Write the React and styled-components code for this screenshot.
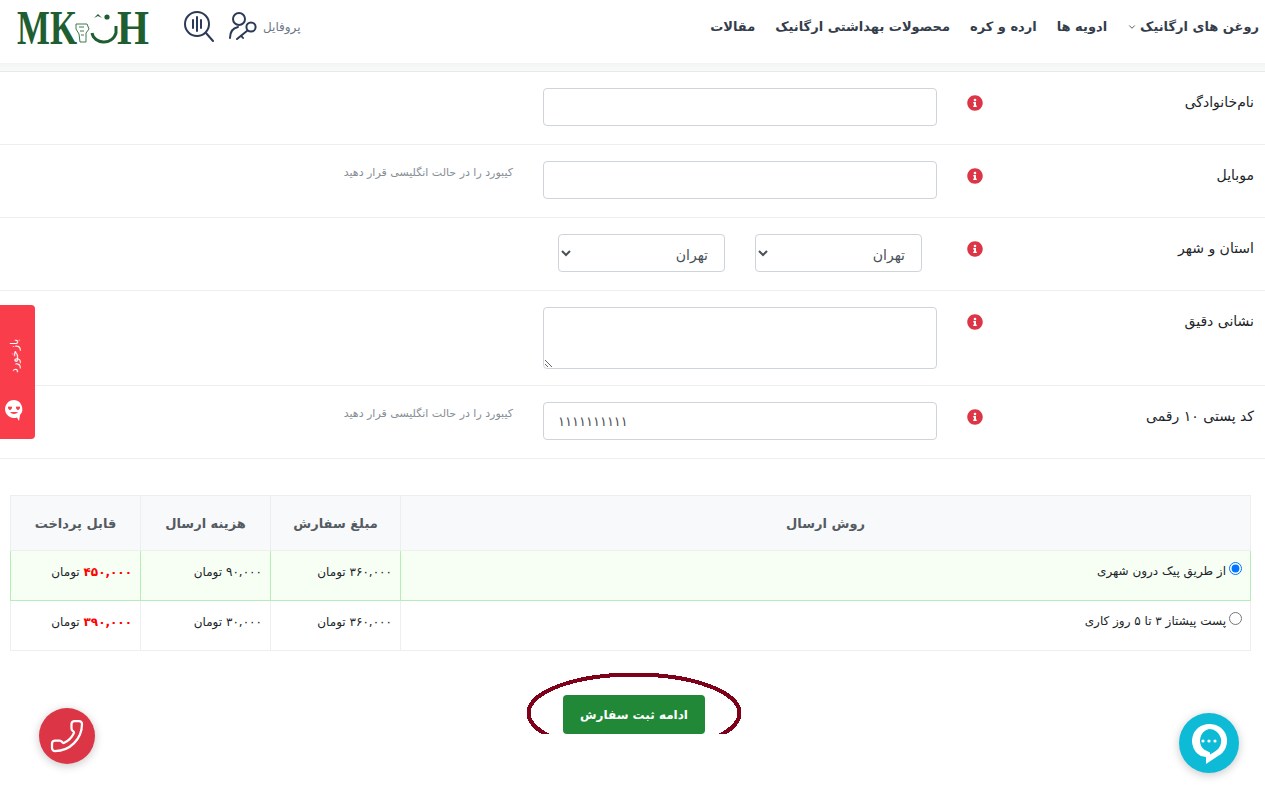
import React from 'react'
import styled, { createGlobalStyle } from 'styled-components'
import { ChevronDown, Phone } from 'lucide-react'
import { FaInfoCircle } from 'react-icons/fa'

const Global = createGlobalStyle`
  html, body {
    margin: 0;
    padding: 0;
    background: #fff;
    overflow: hidden;
  }
  body {
    direction: rtl;
    font-family: "DejaVu Sans", "Noto Sans", sans-serif;
    color: #212529;
  }
  * { box-sizing: border-box; }
`

const Header = styled.header`
  height: 63px;
  padding: 0 6px 10px 17px;
  background: #fff;
  display: flex;
  align-items: center;
  justify-content: space-between;
`

const HeaderEdge = styled.div`
  height: 9px;
  background: linear-gradient(#f3f4f4, #f8f9f9);
  border-bottom: 1px solid #e6e8ea;
`

const Nav = styled.nav`
  display: flex;
  align-items: center;
  gap: 20px;
`

const NavItem = styled.a`
  display: flex;
  align-items: center;
  gap: 3px;
  font-size: 13px;
  font-weight: 700;
  color: #343d4b;
  white-space: nowrap;
`

const Tools = styled.div`
  display: flex;
  align-items: center;
`

const ProfileLink = styled.a`
  display: flex;
  align-items: center;
  gap: 4px;
  font-size: 12px;
  color: #6c7688;
`

const SearchIcon = styled.svg`
  width: 30px;
  height: 36px;
  margin: 0 15px 0 34px;
`

const Row = styled.section`
  min-height: 73px;
  padding: 16px 0;
  display: grid;
  grid-template-columns: 275px 53px 394px 1fr;
  border-bottom: 1px solid #eceeef;
`

const Label = styled.label`
  padding: 6px 11px 0 0;
  font-size: 14px;
  color: #212529;
`

const InfoCell = styled.div`
  padding: 7px 7px 0 0;
  color: #dc3545;
  font-size: 16px;
  line-height: 16px;
`

const Field = styled.input`
  width: 394px;
  height: 38px;
  padding: 0 14px;
  border: 1px solid #ced4da;
  border-radius: 4px;
  background: #fff;
  font: 13px "DejaVu Sans", sans-serif;
  color: #495057;
  direction: ${p => (p.$ltr ? 'ltr' : 'rtl')};
`

const TextArea = styled.textarea`
  display: block;
  width: 394px;
  height: 62px;
  border: 1px solid #ced4da;
  border-radius: 4px;
`

const SelectGroup = styled.div`
  display: flex;
  gap: 30px;
  padding-right: 15px;
`

const Select = styled.select`
  width: 167px;
  height: 38px;
  padding: 4px 12px 0 0;
  border: 1px solid #ced4da;
  border-radius: 4px;
  background: #fff;
  font: 14px "DejaVu Sans", sans-serif;
  color: #495057;
`

const Hint = styled.p`
  margin: 5px 30px 0 0;
  font-size: 11px;
  color: #868e96;
`

const Table = styled.table`
  width: 1240px;
  margin: 36px 14px 0 11px;
  border-collapse: collapse;
  table-layout: fixed;
`

const HeadCell = styled.th`
  height: 55px;
  padding: 0;
  background: #f8f9fa;
  border: 1px solid #eeeeee;
  font-size: 13px;
  font-weight: 700;
  color: #555b62;
  text-align: center;
`

const Cell = styled.td`
  height: 50px;
  padding: 14px 8px 0;
  vertical-align: top;
  text-align: right;
  font-size: 12px;
  color: #212529;
  background: ${p => (p.$active ? '#f7fff5' : '#fff')};
  border: 1px solid ${p => (p.$active ? '#b5eeb5' : '#eeeeee')};
`

const MethodCell = styled(Cell)`
  padding-top: 13px;
  padding-right: 8px;
`

const Method = styled.label`
  display: flex;
  align-items: center;
  gap: 3px;
  font-size: 12px;
`

const Radio = styled.input`
  width: 13px;
  height: 13px;
  margin: 0;
  position: relative;
  top: -3px;
`

const Price = styled.b`
  color: #ff0000;
`

const Submit = styled.div`
  display: flex;
  justify-content: center;
  margin-top: 44px;
  padding-left: 3px;
`

const SubmitWrap = styled.div`
  position: relative;
`

const SubmitButton = styled.button`
  display: block;
  width: 142px;
  height: 39px;
  border: 0;
  border-radius: 4px;
  background: #218838;
  color: #fff;
  font: 700 12px "DejaVu Sans", sans-serif;
`

const Ring = styled.svg`
  position: absolute;
  left: -37px;
  top: -23px;
  width: 216px;
  height: 82px;
  pointer-events: none;
`

const FeedbackTab = styled.a`
  position: fixed;
  left: 0;
  top: 305px;
  width: 35px;
  height: 134px;
  padding: 30px 0 0;
  border-radius: 0 4px 4px 0;
  background: #f93d4b;
  color: #fff;
  display: flex;
  flex-direction: column;
  align-items: center;
  font-size: 11px;
`

const FeedbackText = styled.span`
  writing-mode: vertical-rl;
  transform: rotate(180deg);
  height: 42px;
  margin: 0 6px 0 0;
  text-align: center;
`

const FeedbackIcon = styled.svg`
  width: 22px;
  height: 24px;
  margin: 21px 7px 0 0;
`

const RoundButton = styled.a`
  position: fixed;
  left: ${p => p.$left}px;
  top: ${p => p.$top}px;
  width: ${p => p.$size}px;
  height: ${p => p.$size}px;
  border-radius: 50%;
  background: ${p => p.$color};
  box-shadow: 0 2px 10px rgba(0, 0, 0, 0.22);
  display: flex;
  align-items: center;
  justify-content: center;
  color: #fff;
`

const PhoneIcon = styled(Phone)`
  transform: scaleX(-1);
`

const LogoMark = () => (
  <svg width="133" height="42" viewBox="0 0 133 42">
    <g fill="#1f5e30" fontFamily="Liberation Serif, serif" fontWeight="700" fontSize="48" direction="ltr">
      <text x="0" y="38" textLength="60" lengthAdjust="spacingAndGlyphs">MK</text>
      <text x="100" y="38" textLength="32" lengthAdjust="spacingAndGlyphs">H</text>
    </g>
    <g fill="none" stroke="#3c7a4c" strokeWidth="1">
      <path d="M59 18h11l2 5-3 4v9h-6l-1-8-3-5z" />
      <path d="M62 21h5M63 25h4M64 29h3" />
    </g>
    <path d="M75 27c2 11 20 13 24 0V20" fill="none" stroke="#1f5e30" strokeWidth="3" />
    <circle cx="90" cy="11" r="2.6" fill="#1f5e30" />
    <path d="M77 12l4-4 4 4-4-2z" fill="#1f5e30" />
  </svg>
)

const UserKey = () => (
  <svg width="30" height="32" viewBox="0 0 30 32" fill="none" stroke="#2c3a56" strokeWidth="2" strokeLinecap="round">
    <circle cx="10" cy="8" r="6" />
    <path d="M1 27c0-6 3-10 8-11" />
    <circle cx="22" cy="16" r="4.6" />
    <path d="M18.5 19.5L8 28v0M12 24.500l2 2.500" />
  </svg>
)

const rows = [
  { method: 'از طریق پیک درون شهری', order: '۳۶۰,۰۰۰', shipping: '۹۰,۰۰۰', total: '۴۵۰,۰۰۰', active: true },
  { method: 'پست پیشتاز ۳ تا ۵ روز کاری', order: '۳۶۰,۰۰۰', shipping: '۳۰,۰۰۰', total: '۳۹۰,۰۰۰', active: false },
]

const hint = 'کیبورد را در حالت انگلیسی قرار دهید'

const Info = () => (
  <InfoCell>
    <FaInfoCircle />
  </InfoCell>
)

export default function App() {
  return (
    <>
      <Global />
      <Header>
        <Nav>
          <NavItem>روغن های ارگانیک <ChevronDown size={10} /></NavItem>
          <NavItem>ادویه ها</NavItem>
          <NavItem>ارده و کره</NavItem>
          <NavItem>محصولات بهداشتی ارگانیک</NavItem>
          <NavItem>مقالات</NavItem>
        </Nav>
        <Tools>
          <ProfileLink>پروفایل <UserKey /></ProfileLink>
          <SearchIcon viewBox="0 0 30 36" fill="none" stroke="#2c3a56" strokeWidth="2" strokeLinecap="round">
            <circle cx="13" cy="15" r="12" />
            <path d="M22 24l7 8M9 11v8M13 8v14M17 11v8" />
          </SearchIcon>
          <LogoMark />
        </Tools>
      </Header>
      <HeaderEdge />

      <Row>
        <Label>نام‌خانوادگی</Label>
        <Info />
        <Field />
      </Row>
      <Row>
        <Label>موبایل</Label>
        <Info />
        <Field />
        <Hint>{hint}</Hint>
      </Row>
      <Row>
        <Label>استان و شهر</Label>
        <Info />
        <SelectGroup>
          <Select><option>تهران</option></Select>
          <Select><option>تهران</option></Select>
        </SelectGroup>
      </Row>
      <Row>
        <Label>نشانی دقیق</Label>
        <Info />
        <TextArea />
      </Row>
      <Row>
        <Label>کد پستی ۱۰ رقمی</Label>
        <Info />
        <Field $ltr defaultValue="۱۱۱۱۱۱۱۱۱۱" />
        <Hint>{hint}</Hint>
      </Row>

      <Table>
        <colgroup>
          <col style={{ width: 850 }} />
          <col style={{ width: 130 }} />
          <col style={{ width: 130 }} />
          <col style={{ width: 130 }} />
        </colgroup>
        <thead>
          <tr>
            <HeadCell>روش ارسال</HeadCell>
            <HeadCell>مبلغ سفارش</HeadCell>
            <HeadCell>هزینه ارسال</HeadCell>
            <HeadCell>قابل پرداخت</HeadCell>
          </tr>
        </thead>
        <tbody>
          {rows.map(r => (
            <tr key={r.method}>
              <MethodCell $active={r.active}>
                <Method>
                  <Radio type="radio" name="method" defaultChecked={r.active} />
                  {r.method}
                </Method>
              </MethodCell>
              <Cell $active={r.active}>{r.order} تومان</Cell>
              <Cell $active={r.active}>{r.shipping} تومان</Cell>
              <Cell $active={r.active}><Price>{r.total}</Price> تومان</Cell>
            </tr>
          ))}
        </tbody>
      </Table>

      <Submit>
        <SubmitWrap>
          <SubmitButton>ادامه ثبت سفارش</SubmitButton>
          <Ring viewBox="0 0 216 82" shapeRendering="crispEdges">
            <ellipse cx="108" cy="41" rx="105.500" ry="38.500" fill="none" stroke="#7f0019" strokeWidth="4" />
          </Ring>
        </SubmitWrap>
      </Submit>

      <FeedbackTab>
        <FeedbackText>بازخورد</FeedbackText>
        <FeedbackIcon viewBox="0 0 22 24">
          <path d="M11 2a9 9 0 1 0 3 17.500L16 23l1-6a9 9 0 0 0-6-15z" fill="#fff" />
          <path d="M7 9c-2-1.500-3 1-1 2.500l1 .8 1-.8c2-1.500 1-4-1-2.500zM15 9c-2-1.500-3 1-1 2.500l1 .8 1-.8c2-1.500 1-4-1-2.500z" fill="#f93d4b" />
          <path d="M7 14c2 2.500 6 2.500 8 0z" fill="#f93d4b" />
        </FeedbackIcon>
      </FeedbackTab>

      <RoundButton $left={39} $top={708} $size={56} $color="#dc3545">
        <PhoneIcon size={36} strokeWidth={1.5} />
      </RoundButton>

      <RoundButton $left={1179} $top={713} $size={60} $color="#0dbbd6">
        <svg width="40" height="44" viewBox="0 0 40 44">
          <path d="M20 3a17 17 0 0 0-8 32v0l5 1v7l12-8A17 17 0 0 0 20 3zm0 5a12 12 0 0 1 6 22.500l-5 3v-2l-6-3A12 12 0 0 1 20 8z" fill="#fff" fillRule="evenodd" />
          <circle cx="14" cy="20" r="1.600" fill="#fff" />
          <circle cx="20" cy="20" r="1.600" fill="#fff" />
          <circle cx="26" cy="20" r="1.600" fill="#fff" />
        </svg>
      </RoundButton>
    </>
  )
}
